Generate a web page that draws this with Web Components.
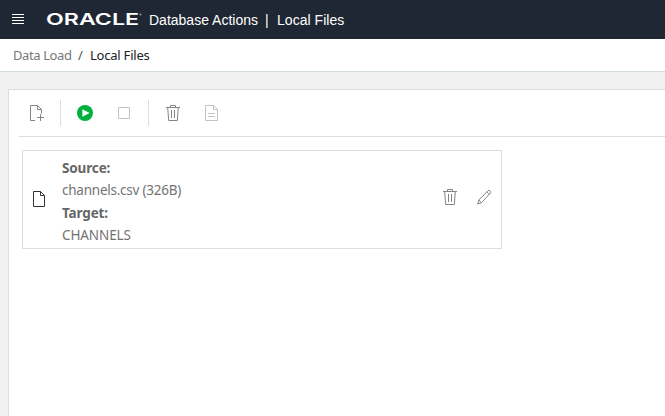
<!DOCTYPE html>
<html lang="en">
<head>
<meta charset="utf-8">
<title>Local Files</title>
<style>
html,body{margin:0;height:100%;overflow:hidden;background:#f1f1f1}
body{font-family:"Noto Sans","Open Sans",sans-serif;color:#666}
</style>
</head>
<body>
<data-load-page></data-load-page>
<script>
const define = (name, html) => customElements.define(name, class extends HTMLElement {
  constructor() {
    super();
    this.attachShadow({mode: 'open'}).innerHTML = html;
  }
});

const icons = {
  menu: '<path d="M0 .5h12M0 3.5h12M0 6.5h12M0 9.5h12"/>',
  add: '<path d="M6 16.5H1.5v-15h7l4 4v4M8.5 1.5v4h4M11.5 10v7M8 13.5h7"/>',
  play: '<circle cx="8" cy="8" r="8" fill="#00b140" stroke="none"/><path d="M5.4 4.3v7.4L12.6 8z" fill="#fff" stroke="none"/>',
  stop: '<path d="M.5.5h11v11H.5z"/>',
  trash: '<path d="M0 2.5h14M4.5 2.5v-2h5v2M1.7 2.5l1 13h8.6l1-13M5.5 5v8M8.5 5v8"/>',
  doc: '<path d="M.5.5h8l4 4v11H.5zM8.5.5v4h4M3 8.5h7M3 11.5h7"/>',
  file: '<path d="M.5.5h7l4 4v11H.5zM7.5.5v4h4"/>',
  edit: '<path d="M.7 15l1.1-4L11 1.7a1.3 1.3 0 0 1 1.9 0l.5.5a1.3 1.3 0 0 1 0 1.9L4.4 13.8zM9.9 2.8l2.5 2.5M1.8 11l2.6 2.8"/>'
};
customElements.define('ui-icon', class extends HTMLElement {
  constructor() {
    super();
    this.attachShadow({mode: 'open'});
  }
  connectedCallback() {
    this.shadowRoot.innerHTML = `<style>:host{display:block;flex:none;width:16px;height:17px}svg{display:block;width:100%;height:100%;overflow:visible;fill:none;stroke:currentColor;stroke-width:1}</style><svg>${icons[this.getAttribute('name')]}</svg>`;
  }
});

define('oracle-logo', `<style>
:host{display:block;width:96px;height:16px;flex:none}
svg{display:block;overflow:visible;fill:#fff}
.w{font:600 16.5px "Inter",sans-serif}
</style><svg width="96" height="16"><text class="w" x="-1" y="13" textLength="93" lengthAdjust="spacingAndGlyphs">ORACLE</text><circle cx="93.5" cy="2.5" r=".9" fill="#9ba1a8"/></svg>`);

define('app-header', `<style>
:host{display:flex;height:39px;box-sizing:border-box;align-items:center;background:#1e2733;color:#fff;padding-left:12px;font:14px/20px "Liberation Sans",Arial,sans-serif}
ui-icon{width:12px;height:11px;margin-right:23px}
oracle-logo{margin-right:6px}
span{white-space:pre;padding-top:1px}
.a{width:116px}.b{width:12px}.c{letter-spacing:.04px}
</style><ui-icon name="menu"></ui-icon><oracle-logo></oracle-logo><span class="a">Database Actions</span><span class="b">|</span><span class="c">Local Files</span>`);

define('bread-crumbs', `<style>
:host{display:flex;height:33px;box-sizing:border-box;align-items:center;background:#fff;border-bottom:1px solid #d3dde2;padding-left:13px;font-size:13px;line-height:18px;color:#777}
span{white-space:pre}
.a{width:65px;letter-spacing:-.4px}.b{width:12px;color:#555}.c{color:#222;letter-spacing:-.22px}
</style><span class="a">Data Load</span><span class="b">/</span><span class="c">Local Files</span>`);

define('tool-bar', `<style>
:host{display:flex;height:47px;box-sizing:border-box;align-items:center;border-bottom:1px solid #ddd;margin-left:10px;padding-left:10px;color:#858585}
i{width:1px;height:26px;background:#ddd}
.add{margin-right:15px;height:18px}
.play{margin:0 25px 0 16px;height:16px}
.stop{width:12px;height:12px;margin-right:18px;color:#c3c3c3}
.trash{width:14px;margin:0 25px 0 17px}
.doc{width:13px;color:#c3c3c3}
</style><ui-icon class="add" name="add"></ui-icon><i></i><ui-icon class="play" name="play"></ui-icon><ui-icon class="stop" name="stop"></ui-icon><i></i><ui-icon class="trash" name="trash"></ui-icon><ui-icon class="doc" name="doc"></ui-icon>`);

define('file-card', `<style>
:host{display:flex;box-sizing:border-box;width:480px;height:99px;align-items:center;border:1px solid #ddd;margin:13px 0 0 13px;padding-left:10px;font-size:13.5px;color:#737373}
.f{width:12px;height:16px;margin:0 17px 2px 0;color:#333}
.text{flex:1;display:grid;grid-template-rows:22px 23px 22px 22px;line-height:22px;padding-top:4px}
.text ::slotted(*){white-space:nowrap}
b{letter-spacing:-.15px;color:#666}
.t,.e{width:14px;height:16px;color:#858585;margin-bottom:5px}
.t{margin-right:20px}
.e{margin-right:10px}
</style><ui-icon class="f" name="file"></ui-icon><div class="text"><b>Source:</b><slot name="source"></slot><b>Target:</b><slot name="target"></slot></div><ui-icon class="t" name="trash"></ui-icon><ui-icon class="e" name="edit"></ui-icon>`);

define('work-panel', `<style>:host{display:block;box-sizing:border-box;background:#fff;border:1px solid #ddd;border-width:1px 0 0 1px;margin:17px 0 0 8px;flex:1}</style><slot></slot>`);

define('data-load-page', `<style>:host{display:flex;flex-direction:column;height:100vh}
.s{letter-spacing:-.24px}.t{letter-spacing:-.1px}</style>
<app-header></app-header><bread-crumbs></bread-crumbs>
<work-panel><tool-bar></tool-bar><file-card><span class="s" slot="source">channels.csv (326B)</span><span class="t" slot="target">CHANNELS</span></file-card></work-panel>`);
</script>
</body>
</html>
